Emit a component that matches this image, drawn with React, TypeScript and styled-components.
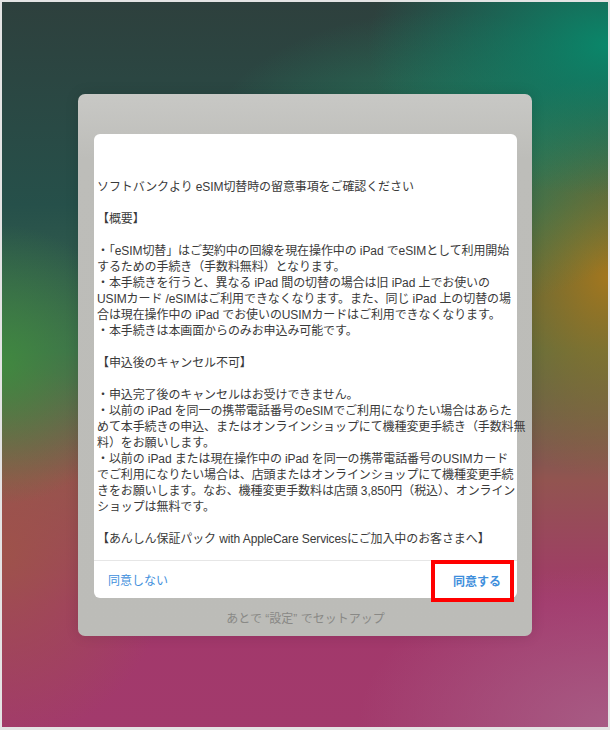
import React from 'react';
import styled, { createGlobalStyle } from 'styled-components';

const GlobalStyle = createGlobalStyle`
  html, body {
    margin: 0;
    padding: 0;
    background: #e4e4e4;
  }
  body {
    font-family: "Liberation Sans", "Noto Sans CJK JP", sans-serif;
  }
`;

const Frame = styled.div`
  width: 610px;
  height: 730px;
  box-sizing: border-box;
  padding: 2px 2px 3px 2px;
  background: #e4e4e4;
`;

const Wallpaper = styled.div`
  width: 100%;
  height: 100%;
  display: flex;
  justify-content: center;
  align-items: flex-start;
  padding-top: 92px;
  box-sizing: border-box;
  background:
    radial-gradient(ellipse 240px 150px at 100% 6%, rgba(8, 138, 108, 0.95), rgba(8, 138, 108, 0) 100%),
    radial-gradient(ellipse 240px 150px at 72% 22%, rgba(35, 140, 100, 0.75), rgba(35, 140, 100, 0) 100%),
    radial-gradient(ellipse 180px 200px at 100% 38%, rgba(168, 120, 28, 0.95), rgba(168, 120, 28, 0) 100%),
    radial-gradient(ellipse 130px 140px at 0% 50%, rgba(64, 140, 62, 0.9), rgba(64, 140, 62, 0) 100%),
    radial-gradient(ellipse 170px 190px at 0% 76%, rgba(158, 84, 72, 0.9), rgba(158, 84, 72, 0) 100%),
    radial-gradient(ellipse 250px 160px at 100% 100%, rgba(168, 95, 135, 0.9), rgba(168, 95, 135, 0) 100%),
    linear-gradient(180deg, #2e403d 0%, #26504a 28%, #3e6850 48%, #925450 66%, #a2386b 83%, #a23a6c 100%);
`;

const Sheet = styled.div`
  width: 454px;
  height: 542px;
  box-sizing: border-box;
  border-radius: 7px;
  background: linear-gradient(180deg, #c8c8c5 0%, #bdbdb9 12%, #bcbcb8 100%);
  box-shadow: 0 0 14px rgba(0, 0, 0, 0.12);
  padding: 40px 15px 0 16px;
  display: flex;
  flex-direction: column;
`;

const Card = styled.div`
  background: #fff;
  border-radius: 6px;
  display: flex;
  flex-direction: column;
`;

const Body = styled.div`
  padding: 45px 0 13px 3px;
  color: #3a3a3a;
  font-size: 12px;
`;

const Line = styled.div`
  height: 16px;
  line-height: 16px;
  white-space: nowrap;
  letter-spacing: -0.1px;
`;

const Actions = styled.div`
  height: 37px;
  border-top: 1px solid #e6e6e6;
  display: flex;
  align-items: center;
  justify-content: space-between;
  padding: 0 3px 0 14px;
`;

const Action = styled.div<{ $primary?: boolean }>`
  color: #3f8fdc;
  font-size: 12px;
  font-weight: ${(p) => (p.$primary ? 700 : 400)};
`;

const Highlight = styled.div`
  width: 83px;
  height: 42px;
  box-sizing: border-box;
  border: 4px solid #ff0000;
  margin-top: -2px;
  margin-bottom: -4px;
  display: flex;
  align-items: center;
  justify-content: flex-end;
  padding-right: 9px;
  position: relative;
  z-index: 1;
`;

const Later = styled.div`
  height: 39px;
  display: flex;
  align-items: center;
  justify-content: center;
  color: #898986;
  font-size: 12px;
`;

const lines: string[] = [
  'ソフトバンクより eSIM切替時の留意事項をご確認ください',
  '',
  '【概要】',
  '',
  '・「eSIM切替」はご契約中の回線を現在操作中の iPad でeSIMとして利用開始',
  'するための手続き（手数料無料）となります。',
  '・本手続きを行うと、異なる iPad 間の切替の場合は旧 iPad 上でお使いの',
  'USIMカード /eSIMはご利用できなくなります。また、同じ iPad 上の切替の場',
  '合は現在操作中の iPad でお使いのUSIMカードはご利用できなくなります。',
  '・本手続きは本画面からのみお申込み可能です。',
  '',
  '【申込後のキャンセル不可】',
  '',
  '・申込完了後のキャンセルはお受けできません。',
  '・以前の iPad を同一の携帯電話番号のeSIMでご利用になりたい場合はあらた',
  'めて本手続きの申込、またはオンラインショップにて機種変更手続き（手数料無',
  '料）をお願いします。',
  '・以前の iPad または現在操作中の iPad を同一の携帯電話番号のUSIMカード',
  'でご利用になりたい場合は、店頭またはオンラインショップにて機種変更手続',
  'きをお願いします。なお、機種変更手数料は店頭 3,850円（税込）、オンライン',
  'ショップは無料です。',
  '',
  '【あんしん保証パック with AppleCare Servicesにご加入中のお客さまへ】',
];

const App: React.FC = () => {
  return (
    <>
      <GlobalStyle />
      <Frame>
        <Wallpaper>
          <Sheet>
            <Card>
              <Body>
                {lines.map((text, i) => (
                  <Line key={i}>{text || '\u00a0'}</Line>
                ))}
              </Body>
              <Actions>
                <Action>同意しない</Action>
                <Highlight>
                  <Action $primary>同意する</Action>
                </Highlight>
              </Actions>
            </Card>
            <Later>あとで “設定” でセットアップ</Later>
          </Sheet>
        </Wallpaper>
      </Frame>
    </>
  );
};

export default App;
